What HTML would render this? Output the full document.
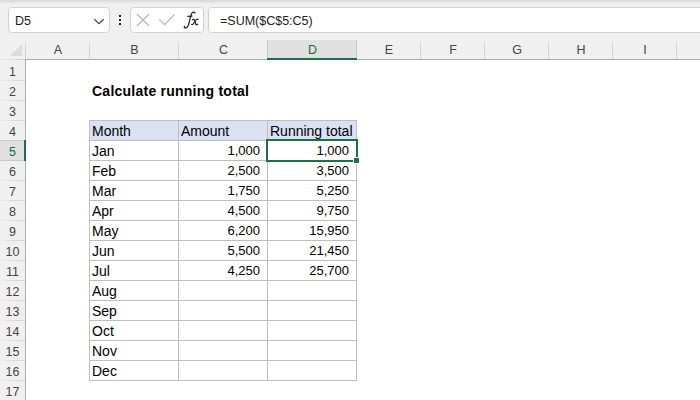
<!DOCTYPE html>
<html><head><meta charset="utf-8">
<style>
*{margin:0;padding:0;box-sizing:border-box}
html,body{width:700px;height:400px;overflow:hidden;background:#fff;font-family:"Liberation Sans",sans-serif;color:#000}
.a{position:absolute}
#top{left:0;top:0;width:700px;height:60px;background:#f0f0f0}
#topline{left:0;top:0;width:700px;height:4px;background:linear-gradient(to bottom,#d8d8d8,#f0f0f0)}
.box{background:#fff;border:1px solid #d2d2d2;border-radius:4px}
.t{position:absolute;white-space:nowrap;font-size:14px;line-height:20px}
.hdr{position:absolute;font-size:12.5px;color:#444;text-align:center;line-height:20px}
.vs{position:absolute;width:1px;background:linear-gradient(to bottom,rgba(213,213,213,0.2),#d3d3d3 40%)}
.hs{position:absolute;height:1px;background:linear-gradient(to right,rgba(220,220,220,0.2),#d8d8d8 60%)}
.bl{position:absolute;background:#bfbfbf}
.n{font-size:13px}
</style></head><body>
<div class="a" id="top"></div>
<div class="a" id="topline"></div>
<!-- name box -->
<div class="a box" style="left:8px;top:7px;width:102px;height:26px"></div>
<div class="t" style="left:15px;top:11px;font-size:12.5px;color:#222">D5</div>
<svg class="a" style="left:94px;top:17px" width="11" height="8" viewBox="0 0 11 8"><path d="M0.3 2.2 L4.9 6.6 L9.6 2.2" fill="none" stroke="#444" stroke-width="1.3"/></svg>
<!-- dots -->
<div class="a" style="left:119px;top:15px;width:2px;height:2px;background:#222"></div>
<div class="a" style="left:119px;top:19px;width:2px;height:2px;background:#222"></div>
<div class="a" style="left:119px;top:23px;width:2px;height:2px;background:#222"></div>
<!-- buttons box -->
<div class="a box" style="left:130px;top:7px;width:74px;height:26px"></div>
<svg class="a" style="left:136px;top:13px" width="14" height="14" viewBox="0 0 14 14"><path d="M1 1 L13 13 M13 1 L1 13" stroke="#b4b4b4" stroke-width="1.2"/></svg>
<svg class="a" style="left:158px;top:13px" width="18" height="14" viewBox="0 0 18 14"><path d="M1.3 6.3 L6.6 11.6 L16.6 1.3" fill="none" stroke="#b4b4b4" stroke-width="1.2"/></svg>
<svg class="a" style="left:178px;top:8px" width="26" height="24" viewBox="0 0 26 24"><path d="M17 5.2 C16.8 3.9 15 3.7 14 4.8 C13.1 6 11.8 12 10.7 16.2 C10 19 8.6 20.2 7 19.9 C6.1 19.7 6 18.9 6.6 18.5" fill="none" stroke="#262626" stroke-width="1.25" stroke-linecap="round"/><path d="M9.3 8.4 L14.4 8.1" stroke="#262626" stroke-width="1.1"/><path d="M14.5 11.9 C15.4 10.9 16.3 11.3 16.7 12.6 L17.7 15.8 C18 16.8 18.8 17.1 19.7 16.3" fill="none" stroke="#262626" stroke-width="1.25" stroke-linecap="round"/><path d="M20.1 11.5 C19.5 10.9 18.8 11.1 18.1 12 L15.4 15.7 C14.7 16.6 14.1 16.8 13.6 16.4" fill="none" stroke="#262626" stroke-width="1.15" stroke-linecap="round"/></svg>
<!-- formula box -->
<div class="a box" style="left:208px;top:7px;width:520px;height:26px;border-top-right-radius:0;border-bottom-right-radius:0"></div>
<div class="t" style="left:220px;top:11px;font-size:12.5px;color:#222">=SUM($C$5:C5)</div>

<!-- column header -->
<div class="a" style="left:25px;top:59px;width:675px;height:1px;background:#adadad"></div>
<div class="a" style="left:0;top:59px;width:25px;height:1px;background:linear-gradient(to right,#e8e8e8,#cdcdcd)"></div>
<div class="vs" style="left:89px;top:40px;height:19px"></div>
<div class="vs" style="left:178px;top:40px;height:19px"></div>
<div class="vs" style="left:267px;top:40px;height:19px"></div>
<div class="vs" style="left:356px;top:40px;height:19px"></div>
<div class="vs" style="left:420px;top:40px;height:19px"></div>
<div class="vs" style="left:484px;top:40px;height:19px"></div>
<div class="vs" style="left:548px;top:40px;height:19px"></div>
<div class="vs" style="left:612px;top:40px;height:19px"></div>
<div class="vs" style="left:676px;top:40px;height:19px"></div>
<div class="vs" style="left:25px;top:40px;height:19px"></div>
<!-- selected D header -->
<div class="a" style="left:267px;top:40px;width:90px;height:18px;background:#e0e0e0"></div>
<div class="a" style="left:267px;top:58px;width:90px;height:2px;background:#1e7145"></div>
<div class="a" style="left:267px;top:40px;width:1px;height:18px;background:#c4c4c4"></div>
<div class="a" style="left:356px;top:40px;width:1px;height:18px;background:#c4c4c4"></div>
<svg class="a" style="left:10px;top:44px" width="13" height="12"><path d="M12 0 L12 12 L0 12 Z" fill="#dcdcdc"/></svg>
<div class="hdr" style="left:26px;top:40px;width:64px">A</div>
<div class="hdr" style="left:90px;top:40px;width:89px">B</div>
<div class="hdr" style="left:179px;top:40px;width:89px">C</div>
<div class="hdr" style="left:268px;top:40px;width:89px;color:#1e6b3f">D</div>
<div class="hdr" style="left:357px;top:40px;width:64px">E</div>
<div class="hdr" style="left:421px;top:40px;width:64px">F</div>
<div class="hdr" style="left:485px;top:40px;width:64px">G</div>
<div class="hdr" style="left:549px;top:40px;width:64px">H</div>
<div class="hdr" style="left:613px;top:40px;width:64px">I</div>

<!-- row header -->
<div class="a" style="left:0;top:60px;width:25px;height:340px;background:#f0f0f0"></div>
<div class="a" style="left:25px;top:59px;width:1px;height:341px;background:#adadad"></div>
<div class="a" style="left:0;top:140px;width:25px;height:20px;background:#e0e0e0"></div>
<div class="a" style="left:24px;top:140px;width:2px;height:21px;background:#1e7145"></div>
<div class="a" style="left:0;top:140px;width:24px;height:1px;background:#c8c8c8"></div>
<div class="a" style="left:0;top:160px;width:24px;height:1px;background:#c8c8c8"></div>
<div class="hs" style="left:0;top:80px;width:25px"></div>
<div class="hs" style="left:0;top:100px;width:25px"></div>
<div class="hs" style="left:0;top:120px;width:25px"></div>
<div class="hs" style="left:0;top:180px;width:25px"></div>
<div class="hs" style="left:0;top:200px;width:25px"></div>
<div class="hs" style="left:0;top:220px;width:25px"></div>
<div class="hs" style="left:0;top:240px;width:25px"></div>
<div class="hs" style="left:0;top:260px;width:25px"></div>
<div class="hs" style="left:0;top:280px;width:25px"></div>
<div class="hs" style="left:0;top:300px;width:25px"></div>
<div class="hs" style="left:0;top:320px;width:25px"></div>
<div class="hs" style="left:0;top:340px;width:25px"></div>
<div class="hs" style="left:0;top:360px;width:25px"></div>
<div class="hs" style="left:0;top:380px;width:25px"></div>
<div class="hdr" style="left:0;top:62px;width:25px">1</div>
<div class="hdr" style="left:0;top:82px;width:25px">2</div>
<div class="hdr" style="left:0;top:102px;width:25px">3</div>
<div class="hdr" style="left:0;top:122px;width:25px">4</div>
<div class="hdr" style="left:0;top:142px;width:25px;color:#1e6b3f">5</div>
<div class="hdr" style="left:0;top:162px;width:25px">6</div>
<div class="hdr" style="left:0;top:182px;width:25px">7</div>
<div class="hdr" style="left:0;top:202px;width:25px">8</div>
<div class="hdr" style="left:0;top:222px;width:25px">9</div>
<div class="hdr" style="left:0;top:242px;width:25px">10</div>
<div class="hdr" style="left:0;top:262px;width:25px">11</div>
<div class="hdr" style="left:0;top:282px;width:25px">12</div>
<div class="hdr" style="left:0;top:302px;width:25px">13</div>
<div class="hdr" style="left:0;top:322px;width:25px">14</div>
<div class="hdr" style="left:0;top:342px;width:25px">15</div>
<div class="hdr" style="left:0;top:362px;width:25px">16</div>
<div class="hdr" style="left:0;top:382px;width:25px">17</div>

<!-- title -->
<div class="t" style="left:92px;top:81px;font-weight:bold;letter-spacing:0.24px">Calculate running total</div>

<!-- table -->
<div class="a" style="left:89px;top:120px;width:268px;height:20px;background:#d9e1f2"></div>
<div class="bl" style="left:89px;top:120px;width:268px;height:1px"></div>
<div class="bl" style="left:89px;top:140px;width:268px;height:1px"></div>
<div class="bl" style="left:89px;top:160px;width:268px;height:1px"></div>
<div class="bl" style="left:89px;top:180px;width:268px;height:1px"></div>
<div class="bl" style="left:89px;top:200px;width:268px;height:1px"></div>
<div class="bl" style="left:89px;top:220px;width:268px;height:1px"></div>
<div class="bl" style="left:89px;top:240px;width:268px;height:1px"></div>
<div class="bl" style="left:89px;top:260px;width:268px;height:1px"></div>
<div class="bl" style="left:89px;top:280px;width:268px;height:1px"></div>
<div class="bl" style="left:89px;top:300px;width:268px;height:1px"></div>
<div class="bl" style="left:89px;top:320px;width:268px;height:1px"></div>
<div class="bl" style="left:89px;top:340px;width:268px;height:1px"></div>
<div class="bl" style="left:89px;top:360px;width:268px;height:1px"></div>
<div class="bl" style="left:89px;top:380px;width:268px;height:1px"></div>
<div class="bl" style="left:89px;top:120px;width:1px;height:261px"></div>
<div class="bl" style="left:178px;top:120px;width:1px;height:261px"></div>
<div class="bl" style="left:267px;top:120px;width:1px;height:261px"></div>
<div class="bl" style="left:356px;top:120px;width:1px;height:261px"></div>
<div class="t" style="left:92px;top:121px">Month</div>
<div class="t" style="left:181px;top:121px">Amount</div>
<div class="t" style="left:270px;top:121px">Running total</div>
<div class="t" style="left:92px;top:141px">Jan</div>
<div class="t n" style="right:440px;top:141px">1,000</div>
<div class="t n" style="right:351px;top:141px">1,000</div>
<div class="t" style="left:92px;top:161px">Feb</div>
<div class="t n" style="right:440px;top:161px">2,500</div>
<div class="t n" style="right:351px;top:161px">3,500</div>
<div class="t" style="left:92px;top:181px">Mar</div>
<div class="t n" style="right:440px;top:181px">1,750</div>
<div class="t n" style="right:351px;top:181px">5,250</div>
<div class="t" style="left:92px;top:201px">Apr</div>
<div class="t n" style="right:440px;top:201px">4,500</div>
<div class="t n" style="right:351px;top:201px">9,750</div>
<div class="t" style="left:92px;top:221px">May</div>
<div class="t n" style="right:440px;top:221px">6,200</div>
<div class="t n" style="right:351px;top:221px">15,950</div>
<div class="t" style="left:92px;top:241px">Jun</div>
<div class="t n" style="right:440px;top:241px">5,500</div>
<div class="t n" style="right:351px;top:241px">21,450</div>
<div class="t" style="left:92px;top:261px">Jul</div>
<div class="t n" style="right:440px;top:261px">4,250</div>
<div class="t n" style="right:351px;top:261px">25,700</div>
<div class="t" style="left:92px;top:281px">Aug</div>
<div class="t" style="left:92px;top:301px">Sep</div>
<div class="t" style="left:92px;top:321px">Oct</div>
<div class="t" style="left:92px;top:341px">Nov</div>
<div class="t" style="left:92px;top:361px">Dec</div>
<!-- selection -->
<div class="a" style="left:266px;top:139px;width:92px;height:23px;border:2px solid #1e7145"></div>
<div class="a" style="left:353px;top:157px;width:7px;height:7px;background:#fff"></div>
<div class="a" style="left:354px;top:158px;width:5px;height:5px;background:#1e7145"></div>
</body></html>
